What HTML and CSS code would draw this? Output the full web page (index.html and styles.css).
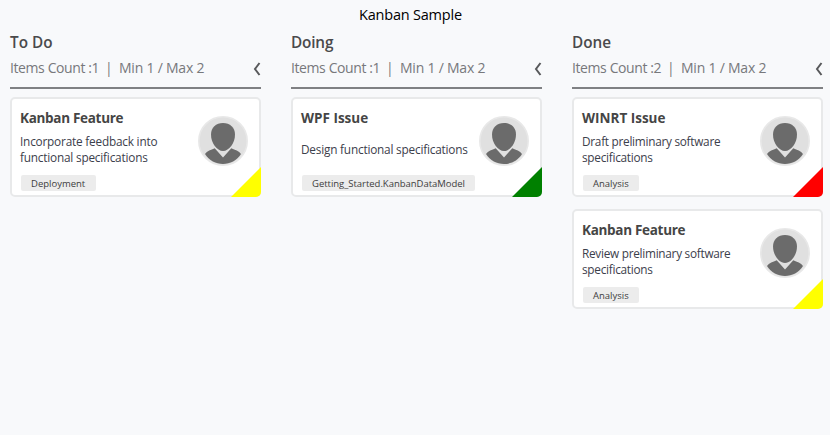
FILE: index.html
```html
<!DOCTYPE html>
<html lang="en">
<head>
<meta charset="utf-8">
<title>Kanban Sample</title>
<link rel="stylesheet" href="styles.css">
</head>
<body>
<svg class="defs" width="0" height="0" aria-hidden="true">
  <symbol id="avatar" viewBox="0 0 50 50">
    <circle cx="25" cy="25" r="24.2" fill="#e0e0e0" stroke="#e8e8e8" stroke-width="1.6"/>
    <path d="M25 7C32 7 37 11.500 37 18.500C37 27 31 35 25 35C19 35 13 27 13 18.500C13 11.500 18 7 25 7Z" fill="#6b6b6b"/>
    <path d="M7 38C9 35 13 34 16.700 32.300L25 41.500L33.300 32.300C37 34 41 35 43 38C39 44.500 32 48 25 48C18 48 11 44.500 7 38Z" fill="#6b6b6b"/>
  </symbol>
  <symbol id="chevron" viewBox="0 0 8 14">
    <path d="M6.500 1L2 7L6.500 13" fill="none" stroke="#58595b" stroke-width="2"/>
  </symbol>
</svg>
<h1 class="title">Kanban Sample</h1>
<main class="board">
  <section class="column">
    <header class="head">
      <h2 class="name">To Do</h2>
      <div class="info"><span class="count">Items Count :1</span><span class="bar">|</span><span class="limits">Min 1 / Max 2</span><svg class="chevron"><use href="#chevron"/></svg></div>
    </header>
    <article class="card">
      <div class="body">
        <h3 class="heading">Kanban Feature</h3>
        <p class="desc"><span>Incorporate feedback into</span> <span>functional specifications</span></p>
        <span class="tag deployment">Deployment</span>
      </div>
      <svg class="avatar"><use href="#avatar"/></svg>
      <i class="corner yellow"></i>
    </article>
  </section>
  <section class="column">
    <header class="head">
      <h2 class="name doing">Doing</h2>
      <div class="info"><span class="count">Items Count :1</span><span class="bar">|</span><span class="limits">Min 1 / Max 2</span><svg class="chevron"><use href="#chevron"/></svg></div>
    </header>
    <article class="card">
      <div class="body">
        <h3 class="heading issue">WPF Issue</h3>
        <p class="desc"><span>Design functional specifications</span></p>
        <span class="tag model">Getting_Started.KanbanDataModel</span>
      </div>
      <svg class="avatar"><use href="#avatar"/></svg>
      <i class="corner green"></i>
    </article>
  </section>
  <section class="column">
    <header class="head">
      <h2 class="name">Done</h2>
      <div class="info"><span class="count">Items Count :2</span><span class="bar">|</span><span class="limits">Min 1 / Max 2</span><svg class="chevron"><use href="#chevron"/></svg></div>
    </header>
    <article class="card">
      <div class="body">
        <h3 class="heading issue">WINRT Issue</h3>
        <p class="desc tight"><span>Draft preliminary software</span> <span>specifications</span></p>
        <span class="tag analysis">Analysis</span>
      </div>
      <svg class="avatar"><use href="#avatar"/></svg>
      <i class="corner red"></i>
    </article>
    <article class="card">
      <div class="body">
        <h3 class="heading">Kanban Feature</h3>
        <p class="desc tight"><span>Review preliminary software</span> <span>specifications</span></p>
        <span class="tag analysis">Analysis</span>
      </div>
      <svg class="avatar"><use href="#avatar"/></svg>
      <i class="corner yellow"></i>
    </article>
  </section>
</main>
</body>
</html>
```
FILE: styles.css
```css
* { box-sizing: border-box; }
body {
  margin: 0;
  height: 435px;
  overflow: hidden;
  background: #f8f9fb;
  font-family: "Open Sans", "Noto Sans", sans-serif;
  white-space: nowrap;
}
h1, h2, h3, p { margin: 0; }
.defs { position: absolute; }
.title {
  height: 30px;
  padding-left: 359px;
  font-size: 14.5px;
  letter-spacing: -0.2px;
  line-height: 30px;
  font-weight: 400;
  color: #000;
}
.board {
  display: grid;
  grid-template-columns: repeat(3, 251px);
  gap: 30px;
  padding-left: 10px;
}
.column { display: flex; flex-direction: column; gap: 12px; }
.head {
  height: 59px;
  margin-bottom: -4px;
  border-bottom: 2px solid #7f8083;
}
.name {
  height: 23px;
  font-size: 15.3px;
  line-height: 25px;
  font-weight: 600;
  color: #4a4a4c;
}
.doing { letter-spacing: -0.15px; }
.info {
  display: flex;
  align-items: center;
  height: 30px;
  font-size: 14px;
  line-height: 20px;
  color: #77787c;
}
.count { width: 95px; letter-spacing: -0.4px; }
.bar { width: 14px; }
.count, .bar, .limits { padding-bottom: 1px; }
.limits { letter-spacing: -0.22px; }
.chevron { width: 8px; height: 14px; margin-left: auto; margin-top: 1px; }
.card {
  position: relative;
  display: flex;
  justify-content: space-between;
  height: 100px;
  padding: 9px 11px 0 8px;
  border: 2px solid #e8e9ea;
  border-radius: 5px;
  background: #fff;
}
.body { width: 170px; }
.heading {
  height: 22px;
  font-size: 13.5px;
  letter-spacing: -0.3px;
  line-height: 20px;
  font-weight: 700;
  color: #454545;
}
.issue { letter-spacing: 0; }
.desc {
  display: flex;
  flex-direction: column;
  justify-content: center;
  height: 38px;
  font-size: 11.8px;
  letter-spacing: -0.2px;
  line-height: 16px;
  color: #3c404b;
}
.tight { letter-spacing: -0.27px; }
.tag {
  display: flex;
  align-items: center;
  height: 16px;
  margin: 7px 0 0 1px;
  padding-left: 10px;
  border-radius: 2px;
  background: #ececec;
  font-size: 9.5px;
  color: #3d3d3d;
}
.deployment { width: 75px; }
.model { width: 173px; letter-spacing: -0.03px; }
.analysis { width: 56px; }
.avatar { flex: none; width: 50px; height: 50px; margin-top: 8px; }
.corner {
  position: absolute;
  right: -2px;
  bottom: -2px;
  width: 30px;
  height: 30px;
  border-bottom-right-radius: 5px;
  clip-path: polygon(100% 0, 100% 100%, 0 100%);
}
.yellow { background: #ff0; }
.green { background: #008000; }
.red { background: #f00; }
```
